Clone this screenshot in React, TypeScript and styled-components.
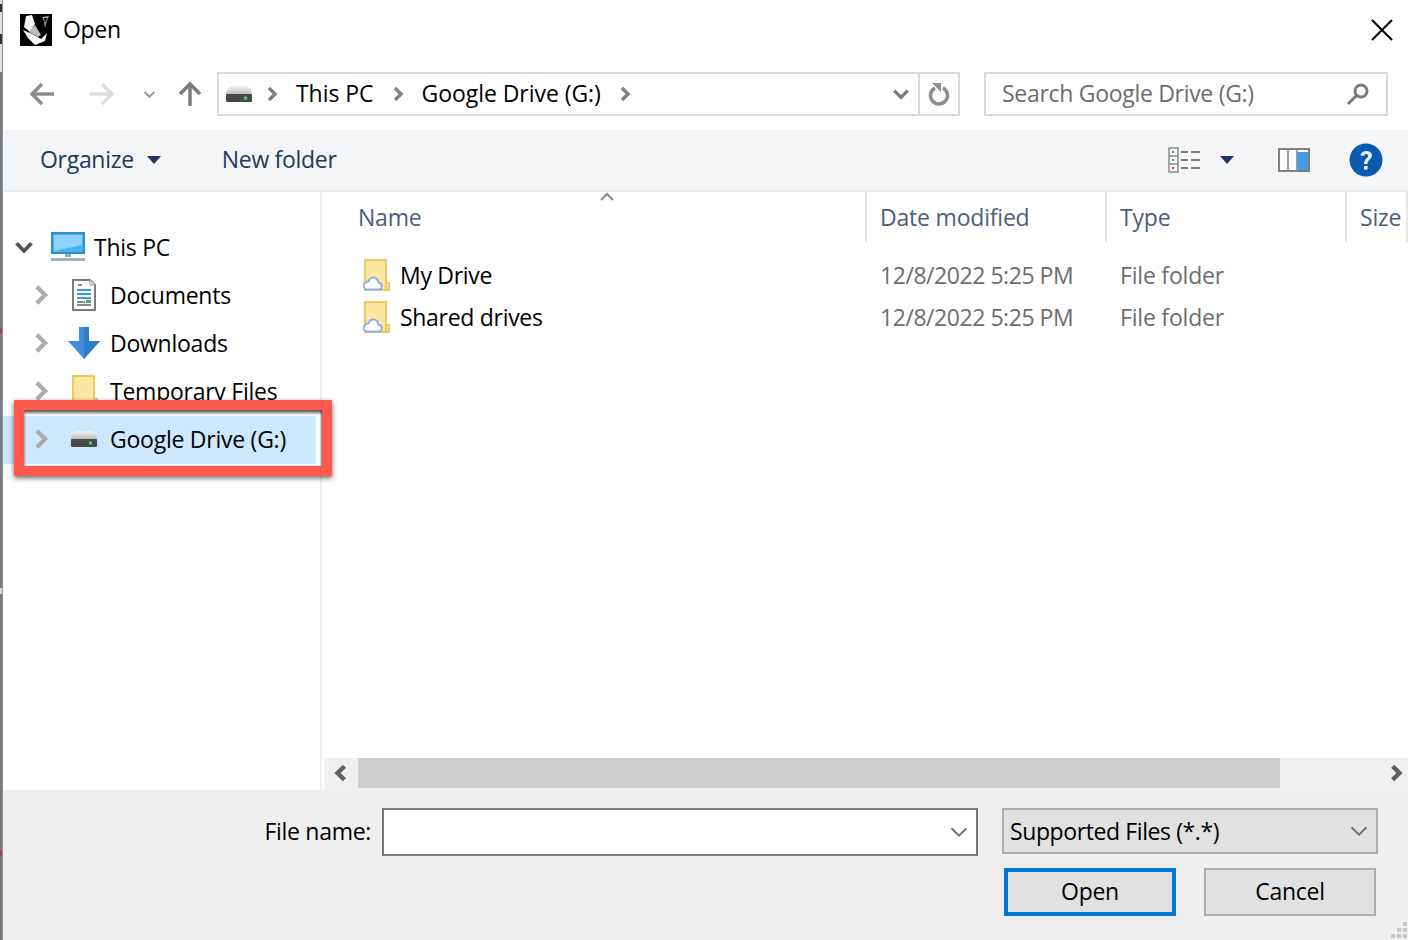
import React from 'react'
import styled, { createGlobalStyle } from 'styled-components'

const GlobalStyle = createGlobalStyle`
  html, body {
    margin: 0;
    padding: 0;
    background: #fff;
  }
  * {
    box-sizing: border-box;
  }
`

const Page = styled.div`
  position: relative;
  display: flex;
  width: 1408px;
  height: 940px;
  overflow: hidden;
  font-family: "Open Sans", "Noto Sans", sans-serif;
  font-size: 23px;
  letter-spacing: -0.3px;
  color: #000;
`

const DesktopEdge = styled.div`
  flex: 0 0 3px;
  border-right: 1px solid #8f9296;
  background: linear-gradient(
    to bottom,
    #ddd 0 4px, #333 4px 12px, #ddd 12px 34px, #333 34px 44px, #ddd 44px 72px,
    #767b82 72px 328px, #a04444 328px 334px, #767b82 334px 588px,
    #d8d8dc 588px 594px, #767b82 594px 850px, #a04444 850px 856px, #767b82 856px
  );
`

const Dialog = styled.div`
  flex: 1;
  display: flex;
  flex-direction: column;
  min-width: 0;
`

const TitleBar = styled.div`
  flex: 0 0 60px;
  display: flex;
  align-items: center;
  padding-left: 17px;
  gap: 11px;
`

const TitleText = styled.span`
  padding-bottom: 2px;
`

const CloseButton = styled.div`
  margin-left: auto;
  margin-right: 15px;
  display: flex;
`

const NavBar = styled.div`
  flex: 0 0 70px;
  display: flex;
  align-items: flex-start;
  padding-top: 12px;
`

const NavButton = styled.div<{ $w: number }>`
  flex: 0 0 ${p => p.$w}px;
  height: 44px;
  display: flex;
  align-items: center;
  justify-content: center;
`

const AddressBox = styled.div`
  flex: 0 0 743px;
  height: 44px;
  margin-left: 8px;
  border: 2px solid #d9d9d9;
  display: flex;
  align-items: center;
  padding-left: 6px;
`

const Crumb = styled.span`
  margin: 0 16px 0 16px;
  padding-bottom: 2px;
  white-space: nowrap;
  letter-spacing: -0.05px;
`

const CrumbIcon = styled.span`
  display: flex;
  margin-left: 11px;
`

const AddressEnd = styled.div`
  margin-left: auto;
  height: 100%;
  display: flex;
  align-items: center;
`

const DropSlot = styled.div`
  width: 36px;
  height: 100%;
  display: flex;
  align-items: center;
  justify-content: center;
  border-right: 2px solid #d9d9d9;
`

const RefreshSlot = styled.div`
  width: 38px;
  display: flex;
  align-items: center;
  justify-content: center;
`

const SearchBox = styled.div`
  flex: 0 0 404px;
  height: 44px;
  margin-left: 24px;
  border: 2px solid #d9d9d9;
  display: flex;
  align-items: center;
  justify-content: space-between;
  padding: 0 16px;
  color: #6d6d6d;
`

const SearchText = styled.span`
  padding-bottom: 2px;
`

const Toolbar = styled.div`
  flex: 0 0 62px;
  display: flex;
  align-items: center;
  background: #f3f5f6;
  border-bottom: 2px solid #e8e9ea;
  padding-left: 37px;
  color: #1e3a5f;
`

const ToolItem = styled.div<{ $gap?: number; $left?: number }>`
  display: flex;
  align-items: center;
  gap: ${p => p.$gap ?? 0}px;
  margin-left: ${p => p.$left ?? 0}px;
`

const ToolText = styled.span`
  padding-bottom: 2px;
  white-space: nowrap;
`

const Body = styled.div`
  flex: 1;
  display: flex;
  min-height: 0;
`

const Sidebar = styled.div`
  flex: 0 0 319px;
  border-right: 2px solid #f0f0f0;
  padding-top: 32px;
`

const TreeRow = styled.div<{ $depth: number; $selected?: boolean }>`
  height: 48px;
  display: flex;
  align-items: center;
  padding-left: ${p => 13 + p.$depth * 16}px;
  padding-bottom: 2px;
  margin-right: ${p => (p.$selected ? 4 : 0)}px;
  background: ${p => (p.$selected ? '#cce8ff' : 'transparent')};
`

const TreeArrow = styled.span`
  flex: 0 0 34px;
  width: 34px;
  min-width: 0;
  display: flex;
  align-items: center;
  margin-left: -2px;
  margin-right: 2px;
`

const TreeIcon = styled.span`
  flex: 0 0 36px;
  display: flex;
  align-items: center;
  justify-content: center;
`

const TreeLabel = styled.span`
  margin-left: 8px;
  white-space: nowrap;
  letter-spacing: -0.25px;
`

const Content = styled.div`
  flex: 1;
  display: flex;
  flex-direction: column;
  min-width: 0;
`

const Columns = styled.div`
  display: grid;
  grid-template-columns: 545px 240px 240px 1fr;
`

const HeaderRow = styled(Columns)`
  position: relative;
  height: 50px;
  margin-bottom: 12px;
  color: #4c607a;
  letter-spacing: -0.2px;
`

const HeaderCell = styled.div<{ $first?: boolean }>`
  display: flex;
  align-items: center;
  height: 100%;
  white-space: nowrap;
  overflow: hidden;
  padding-left: ${p => (p.$first ? 36 : 13)}px;
  border-right: 2px solid #e5e5e5;
  &:last-child {
    border-right: 0;
  }
`

const SortCaret = styled.span`
  position: absolute;
  left: 277px;
  top: -3px;
  display: flex;
`

const FileList = styled.div`
  flex: 1;
`

const FileRow = styled(Columns)`
  height: 42px;
  align-items: center;
  white-space: nowrap;
`

const NameCell = styled.div`
  display: flex;
  align-items: center;
  gap: 10px;
  padding-left: 40px;
`

const MetaCell = styled.div<{ $tight?: boolean }>`
  padding-left: 13px;
  color: #6d6d6d;
  letter-spacing: ${p => (p.$tight ? -0.45 : -0.2)}px;
`

const ScrollBar = styled.div`
  flex: 0 0 32px;
  display: flex;
  margin-left: 2px;
  background: #f0f0f0;
`

const ScrollEnd = styled.div`
  flex: 0 0 34px;
  height: 30px;
  display: flex;
  align-items: center;
  justify-content: center;
`

const ScrollThumb = styled.div`
  flex: 0 0 922px;
  height: 30px;
  background: #cdcdcd;
`

const ScrollRest = styled.div`
  flex: 1;
  height: 30px;
  display: flex;
  align-items: center;
  justify-content: flex-end;
  padding-right: 3px;
`

const Footer = styled.div`
  flex: 0 0 150px;
  background: #efefef;
  display: flex;
  flex-direction: column;
  padding-top: 18px;
`

const FooterRow = styled.div`
  display: flex;
  align-items: flex-start;
  justify-content: flex-end;
`

const FileLabel = styled.label`
  line-height: 46px;
  margin-right: 11px;
`

const FileInput = styled.div`
  width: 596px;
  height: 48px;
  background: #fff;
  border: 2px solid #7a7a7a;
  display: flex;
  align-items: center;
  justify-content: flex-end;
  padding-right: 7px;
`

const FilterSelect = styled.div`
  width: 376px;
  height: 46px;
  margin: 0 30px 0 24px;
  background: #e1e1e1;
  border: 2px solid #adadad;
  display: flex;
  align-items: center;
  justify-content: space-between;
  padding: 0 7px 0 6px;
`

const FilterText = styled.span`
  letter-spacing: -0.4px;
`

const ActionRow = styled(FooterRow)`
  margin-top: 12px;
  padding-right: 32px;
  gap: 28px;
`

const ActionButton = styled.div<{ $primary?: boolean }>`
  width: 172px;
  height: 48px;
  padding-bottom: 2px;
  display: flex;
  align-items: center;
  justify-content: center;
  background: #e1e1e1;
  border: ${p => (p.$primary ? '4px solid #0078d7' : '2px solid #adadad')};
`

const ResizeGrip = styled.svg`
  position: absolute;
  right: 1px;
  bottom: 2px;
`

const Callout = styled.div`
  position: absolute;
  left: 14px;
  top: 400px;
  width: 318px;
  height: 76px;
  border: 10px solid #ff5a4d;
  box-shadow: 0 2px 5px rgba(0, 0, 0, 0.6), inset 0 3px 3px rgba(0, 0, 0, 0.6), inset -1px 0 2px rgba(0, 0, 0, 0.25);
  pointer-events: none;
`

const Chevron = ({ dir, color = '#ababab', size = 22, width = 3 }: { dir: 'left' | 'right' | 'up' | 'down'; color?: string; size?: number; width?: number }) => {
  const points = {
    right: '5,2 11,8 5,14',
    left: '11,2 5,8 11,14',
    down: '2,5 8,11 14,5',
    up: '2,11 8,5 14,11',
  }[dir]
  return (
    <svg width={size} height={size} viewBox="0 0 16 16">
      <polyline points={points} fill="none" stroke={color} strokeWidth={width} />
    </svg>
  )
}

const Arrow = ({ dir, color }: { dir: 'left' | 'right' | 'up'; color: string }) => {
  const rotate = { left: 0, right: 180, up: 90 }[dir]
  return (
    <svg width="26" height="26" viewBox="0 0 26 26">
      <g transform={`rotate(${rotate} 13 13)`} fill="none" stroke={color} strokeWidth="3.5">
        <path d="M3 13 H25" />
        <path d="M13 3 L3 13 L13 23" />
      </g>
    </svg>
  )
}

const Caret = () => (
  <svg width="14" height="8" viewBox="0 0 14 8">
    <path d="M0 0 H14 L7 8 Z" fill="#1f3864" />
  </svg>
)

const DriveIcon = ({ id }: { id: string }) => (
  <svg width="28" height="18" viewBox="0 0 28 18">
    <defs>
      <linearGradient id={id} x1="0" y1="0" x2="0" y2="1">
        <stop offset="0" stopColor="#f4f4f4" />
        <stop offset="1" stopColor="#b4b4b4" />
      </linearGradient>
    </defs>
    <path d="M6 1 H22 C24 1 27 7 27 10 H1 C1 7 4 1 6 1 Z" fill={`url(#${id})`} />
    <rect x="1" y="9" width="26" height="8" rx="1" fill="#484848" />
    <rect x="19" y="11.5" width="3" height="3" fill="#3fe04a" />
  </svg>
)

const RhinoIcon = () => (
  <svg width="32" height="32" viewBox="0 0 32 32">
    <rect width="32" height="32" fill="#000" />
    <path d="M6 2 L12 1 L15 10 L10 18 L4 13 Z" fill="#f2f2f2" />
    <path d="M3 16 L12 20 L21 25 L27 19 L25 27 L15 31 L8 24 Z" fill="#fff" />
    <path d="M9 18 L15 11 L21 21 L18 23 Z" fill="#bdbdbd" />
    <path d="M22 3 L29 2 L27 6 L25 14 L24 7 Z" fill="#a8a8a8" />
    <path d="M24 4 L27 4 L25 9 Z" fill="#000" />
  </svg>
)

const PcIcon = () => (
  <svg width="34" height="30" viewBox="0 0 34 30">
    <rect x="1" y="1" width="32" height="20" fill="#4fb2ef" stroke="#2a8fd6" strokeWidth="2" />
    <path d="M3 3 H31 V13 L3 19 Z" fill="#8fd3fa" />
    <rect x="14" y="22" width="6" height="3" fill="#8fa7bb" />
    <rect x="0" y="26" width="34" height="3" fill="#9db4c6" />
  </svg>
)

const DocIcon = () => (
  <svg width="24" height="32" viewBox="0 0 24 32">
    <path d="M1 1 H18 L23 6 V31 H1 Z" fill="#fff" stroke="#7c7c7c" strokeWidth="2" />
    <path d="M18 1 V6 H23" fill="#e6e6e6" stroke="#9a9a9a" />
    <path d="M6 6 H10 M5 11 H19 M5 15 H19 M5 19 H19" stroke="#3f97dd" strokeWidth="2" />
    <path d="M5 23 H13 M5 26 H19" stroke="#8a8a8a" strokeWidth="2" />
    <rect x="14" y="21" width="5" height="3" fill="#5a9a6a" />
  </svg>
)

const DownloadIcon = () => (
  <svg width="32" height="32" viewBox="0 0 32 32">
    <path d="M11 0 H21 V14 H32 L16 32 L0 14 H11 Z" fill="#3f8fdc" />
    <path d="M16 0 H21 V14 H32 L16 32 Z" fill="#2f7cc9" />
  </svg>
)

const FolderIcon = ({ cloud }: { cloud?: boolean }) => (
  <svg width="28" height="32" viewBox="0 0 28 32">
    <path d="M3 1 H24 V31 H3 Z" fill="#fde7a0" stroke="#ecc95f" strokeWidth="2" />
    <path d="M24 24 H27 V31 H24 Z" fill="#fdeeb8" stroke="#ecc95f" strokeWidth="2" />
    {cloud && (
      <path
        d="M5 30.5 H16 C21 30.5 21 24 16.5 23.5 C15 17 8 17 6.5 22.5 C1 22.5 0 30.5 5 30.5 Z"
        fill="#fff"
        stroke="#8fb0f0"
        strokeWidth="2"
      />
    )}
  </svg>
)

const ViewsIcon = () => (
  <svg width="32" height="26" viewBox="0 0 32 26">
    <rect x="1" y="1" width="9" height="24" fill="#fff" stroke="#8a8a8a" strokeWidth="1.5" />
    <path d="M1 9 H10 M1 17 H10" stroke="#8a8a8a" strokeWidth="1.5" />
    <rect x="4" y="4" width="2" height="2" fill="#3f8f5f" />
    <rect x="4" y="12" width="2" height="2" fill="#3f8fdc" />
    <rect x="4" y="20" width="2" height="2" fill="#e02020" />
    <path d="M13 5 H20 M23 5 H32 M13 13 H20 M23 13 H32 M13 21 H20 M23 21 H32" stroke="#7c7c7c" strokeWidth="2" />
  </svg>
)

const PaneIcon = () => (
  <svg width="32" height="24" viewBox="0 0 32 24">
    <rect x="1" y="1" width="30" height="22" fill="#fff" stroke="#808080" strokeWidth="2" />
    <rect x="9" y="2" width="2" height="20" fill="#a0a0a0" />
    <rect x="18" y="2" width="2" height="20" fill="#a0a0a0" />
    <rect x="19" y="4" width="11" height="18" fill="#4a9ce2" />
  </svg>
)

const HelpIcon = () => (
  <svg width="34" height="34" viewBox="0 0 34 34">
    <circle cx="17" cy="17" r="16.5" fill="#0a5bb0" />
    <path d="M11.5 12.5 C12 6.5 23 6.5 23 12.5 C23 16.5 18.5 16.5 18.5 21 H15 C15 15.5 19 15.5 19 12.8 C19 10.5 15.5 10.5 15.2 13 Z" fill="#dfeefa" />
    <rect x="15" y="23" width="3.6" height="3.6" fill="#dfeefa" />
  </svg>
)

const RefreshIcon = () => (
  <svg width="22" height="24" viewBox="0 0 22 24">
    <path d="M7 6 A 8.5 8.5 0 1 0 15 6" fill="none" stroke="#8e8e8e" strokeWidth="3.5" />
    <path d="M4 1 H13 V10 Z" fill="#8e8e8e" />
  </svg>
)

const SearchIcon = () => (
  <svg width="24" height="24" viewBox="0 0 24 24">
    <circle cx="15" cy="9" r="6" fill="none" stroke="#7a7a7a" strokeWidth="3" />
    <path d="M10.5 13.5 L2 22" stroke="#7a7a7a" strokeWidth="3" />
  </svg>
)

const CloseIcon = () => (
  <svg width="22" height="22" viewBox="0 0 22 22">
    <path d="M1 1 L21 21 M21 1 L1 21" stroke="#000" strokeWidth="2" />
  </svg>
)

const files = [
  { name: 'My Drive', date: '12/8/2022 5:25 PM', type: 'File folder' },
  { name: 'Shared drives', date: '12/8/2022 5:25 PM', type: 'File folder' },
]

const gripDots = [
  [12, 0],
  [6, 6],
  [12, 6],
  [0, 12],
  [6, 12],
  [12, 12],
]

export default function App() {
  return (
    <Page>
      <GlobalStyle />
      <DesktopEdge />
      <Dialog>
        <TitleBar>
          <RhinoIcon />
          <TitleText>Open</TitleText>
          <CloseButton>
            <CloseIcon />
          </CloseButton>
        </TitleBar>

        <NavBar>
          <NavButton $w={24} />
          <NavButton $w={30}><Arrow dir="left" color="#8c8c8c" /></NavButton>
          <NavButton $w={30} />
          <NavButton $w={30}><Arrow dir="right" color="#dedede" /></NavButton>
          <NavButton $w={24} />
          <NavButton $w={16}><Chevron dir="down" color="#9a9a9a" size={13} width={2.5} /></NavButton>
          <NavButton $w={20} />
          <NavButton $w={24}><Arrow dir="up" color="#7c7c7c" /></NavButton>
          <NavButton $w={6} />

          <AddressBox>
            <DriveIcon id="drive-address" />
            <CrumbIcon><Chevron dir="right" color="#808080" size={16} width={3.5} /></CrumbIcon>
            <Crumb>This PC</Crumb>
            <Chevron dir="right" color="#808080" size={16} width={3.5} />
            <Crumb>Google Drive (G:)</Crumb>
            <Chevron dir="right" color="#808080" size={16} width={3.5} />
            <AddressEnd>
              <DropSlot><Chevron dir="down" color="#7a7a7a" size={18} /></DropSlot>
              <RefreshSlot><RefreshIcon /></RefreshSlot>
            </AddressEnd>
          </AddressBox>

          <SearchBox>
            <SearchText>Search Google Drive (G:)</SearchText>
            <SearchIcon />
          </SearchBox>
        </NavBar>

        <Toolbar>
          <ToolItem $gap={13}><ToolText>Organize</ToolText> <Caret /></ToolItem>
          <ToolItem $left={61}><ToolText>New folder</ToolText></ToolItem>
          <ToolItem $left={831}><ViewsIcon /></ToolItem>
          <ToolItem $left={20}><Caret /></ToolItem>
          <ToolItem $left={44}><PaneIcon /></ToolItem>
          <ToolItem $left={39}><HelpIcon /></ToolItem>
        </Toolbar>

        <Body>
          <Sidebar>
            <TreeRow $depth={0}>
              <TreeArrow><Chevron dir="down" color="#555" size={20} /></TreeArrow>
              <TreeIcon><PcIcon /></TreeIcon>
              <TreeLabel>This PC</TreeLabel>
            </TreeRow>
            <TreeRow $depth={1}>
              <TreeArrow><Chevron dir="right" /></TreeArrow>
              <TreeIcon><DocIcon /></TreeIcon>
              <TreeLabel>Documents</TreeLabel>
            </TreeRow>
            <TreeRow $depth={1}>
              <TreeArrow><Chevron dir="right" /></TreeArrow>
              <TreeIcon><DownloadIcon /></TreeIcon>
              <TreeLabel>Downloads</TreeLabel>
            </TreeRow>
            <TreeRow $depth={1}>
              <TreeArrow><Chevron dir="right" /></TreeArrow>
              <TreeIcon><FolderIcon /></TreeIcon>
              <TreeLabel>Temporary Files</TreeLabel>
            </TreeRow>
            <TreeRow $depth={1} $selected>
              <TreeArrow><Chevron dir="right" /></TreeArrow>
              <TreeIcon><DriveIcon id="drive-tree" /></TreeIcon>
              <TreeLabel>Google Drive (G:)</TreeLabel>
            </TreeRow>
          </Sidebar>

          <Content>
            <HeaderRow>
              <HeaderCell $first>Name</HeaderCell>
              <HeaderCell>Date modified</HeaderCell>
              <HeaderCell>Type</HeaderCell>
              <HeaderCell>Size</HeaderCell>
              <SortCaret><Chevron dir="up" color="#8a8a8a" size={16} width={2} /></SortCaret>
            </HeaderRow>
            <FileList>
              {files.map(file => (
                <FileRow key={file.name}>
                  <NameCell>
                    <FolderIcon cloud />
                    {file.name}
                  </NameCell>
                  <MetaCell $tight>{file.date}</MetaCell>
                  <MetaCell>{file.type}</MetaCell>
                </FileRow>
              ))}
            </FileList>
            <ScrollBar>
              <ScrollEnd><Chevron dir="left" color="#606060" size={18} width={4} /></ScrollEnd>
              <ScrollThumb />
              <ScrollRest><Chevron dir="right" color="#606060" size={18} width={4} /></ScrollRest>
            </ScrollBar>
          </Content>
        </Body>

        <Footer>
          <FooterRow>
            <FileLabel>File name:</FileLabel>
            <FileInput><Chevron dir="down" color="#707070" size={20} width={1.5} /></FileInput>
            <FilterSelect>
              <FilterText>Supported Files (*.*)</FilterText>
              <Chevron dir="down" color="#707070" size={20} width={1.5} />
            </FilterSelect>
          </FooterRow>
          <ActionRow>
            <ActionButton $primary>Open</ActionButton>
            <ActionButton>Cancel</ActionButton>
          </ActionRow>
        </Footer>
      </Dialog>

      <Callout />
      <ResizeGrip width="16" height="16" viewBox="0 0 16 16">
        {gripDots.map(([x, y]) => (
          <rect key={`${x}-${y}`} x={x} y={y} width="4" height="4" fill="#c6c6c6" />
        ))}
      </ResizeGrip>
    </Page>
  )
}
